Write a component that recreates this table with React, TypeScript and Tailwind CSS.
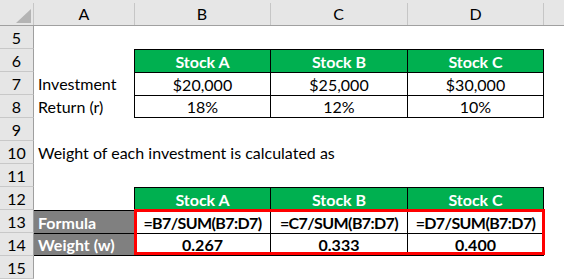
import type { ReactNode } from "react";

const GRID = "grid grid-cols-[34px_100px_136px_137px_137px_1fr]";

function RowNum({ n }: { n: number }) {
  return (
    <div className="flex items-center justify-center border-r border-b border-r-[#9f9f9f] border-b-[#c8c8c8] bg-[#e6e6e6] pt-px">
      {n}
    </div>
  );
}

type CellProps = {
  children?: ReactNode;
  kind?: "green" | "plain" | "bold" | "formula";
  top?: boolean;
  bottom?: boolean;
  right?: boolean;
};

function Cell({ children, kind = "plain", top = true, bottom, right }: CellProps) {
  const base = "flex items-center justify-center whitespace-nowrap border-l border-black pt-px";
  const fill =
    kind === "green"
      ? "bg-[#00b050] font-bold text-white"
      : kind === "bold"
        ? "font-bold"
        : kind === "formula"
          ? "font-bold tracking-[-0.6px]"
          : "";
  return (
    <div
      className={`${base} ${fill} ${top ? "border-t" : ""} ${bottom ? "border-b" : ""} ${right ? "border-r" : ""}`}
    >
      {children}
    </div>
  );
}

function Row({ n, children }: { n: number; children?: ReactNode }) {
  return (
    <div className={`${GRID} h-[23px]`}>
      <RowNum n={n} />
      {children}
    </div>
  );
}

function ColHead({ label, line, lineRight }: { label?: string; line?: boolean; lineRight?: boolean }) {
  return (
    <div
      className={`relative flex items-center justify-center pt-[3px] ${
        line ? "before:absolute before:left-0 before:top-[3px] before:bottom-0 before:w-px before:bg-[#c6c6c6] before:content-['']" : ""
      } ${
        lineRight ? "after:absolute after:right-0 after:top-[3px] after:bottom-0 after:w-px after:bg-[#c6c6c6] after:content-['']" : ""
      }`}
    >
      {label}
    </div>
  );
}

function StockHeader({ n }: { n: number }) {
  return (
    <Row n={n}>
      <div />
      <Cell kind="green">Stock A</Cell>
      <Cell kind="green">Stock B</Cell>
      <Cell kind="green" right>Stock C</Cell>
    </Row>
  );
}

export default function App() {
  return (
    <div className="relative h-[279px] w-[564px] overflow-hidden bg-white font-['Lato','Liberation_Sans',sans-serif] text-[16px] leading-none text-black">
      {/* column letters */}
      <div className={`${GRID} h-[26px] border-b border-[#a0a0a0] bg-[#e6e6e6]`}>
        <div className="relative after:absolute after:right-0 after:top-[3px] after:bottom-0 after:w-px after:bg-[#c6c6c6] after:content-['']">
          <svg className="absolute left-[16px] top-[9px]" width="15" height="14" viewBox="0 0 15 14">
            <polygon points="15,0 15,14 0,14" fill="#b4b4b4" />
          </svg>
        </div>
        <ColHead label="A" />
        <ColHead label="B" line />
        <ColHead label="C" line />
        <ColHead label="D" line lineRight />
        <ColHead />
      </div>

      <Row n={5} />
      <StockHeader n={6} />
      <Row n={7}>
        <div className="flex items-center pl-1 pt-px">Investment</div>
        <Cell>$20,000</Cell>
        <Cell>$25,000</Cell>
        <Cell right>$30,000</Cell>
      </Row>
      <Row n={8}>
        <div className="flex items-center pl-1 pt-px">Return (r)</div>
        <Cell bottom>18%</Cell>
        <Cell bottom>12%</Cell>
        <Cell bottom right>10%</Cell>
      </Row>
      <Row n={9} />
      <Row n={10}>
        <div className="col-span-5 flex items-center whitespace-nowrap pl-1 pt-px">
          Weight of each investment is calculated as
        </div>
      </Row>
      <Row n={11} />
      <StockHeader n={12} />
      <Row n={13}>
        <div className="flex items-center border-t border-black bg-[#808080] pl-1 pt-px font-bold text-white">Formula</div>
        <Cell kind="formula">=B7/SUM(B7:D7)</Cell>
        <Cell kind="formula">=C7/SUM(B7:D7)</Cell>
        <Cell kind="formula" right>=D7/SUM(B7:D7)</Cell>
      </Row>
      <Row n={14}>
        <div className="flex items-center border-y border-black bg-[#808080] pl-1 pt-px font-bold text-white">Weight (w)</div>
        <Cell kind="bold" bottom>0.267</Cell>
        <Cell kind="bold" bottom>0.333</Cell>
        <Cell kind="bold" bottom right>0.400</Cell>
      </Row>
      <Row n={15} />

      {/* red highlight around the formula block */}
      <div className="pointer-events-none absolute left-[134px] top-[209px] h-[46px] w-[411px] border-[3px] border-[#ff0000]" />
    </div>
  );
}
